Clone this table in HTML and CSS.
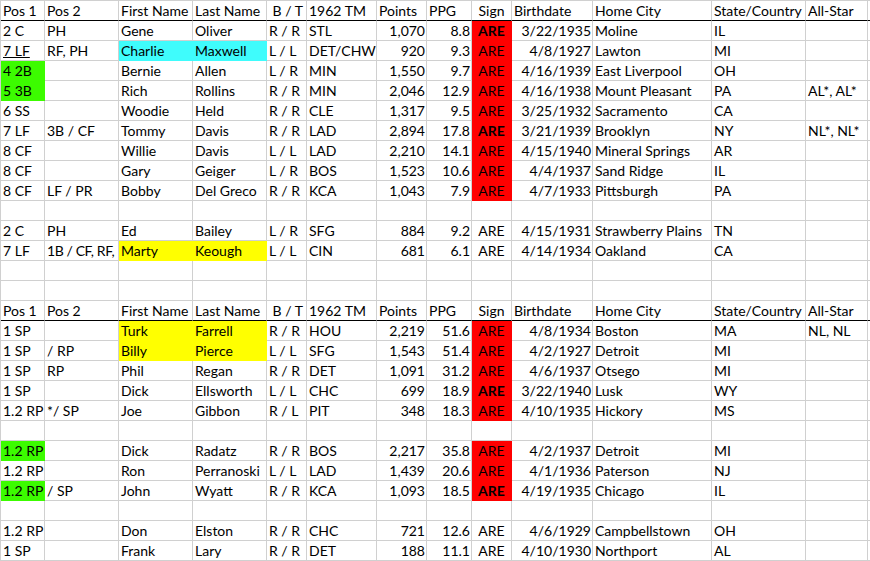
FILE: index.html
```html
<!DOCTYPE html>
<html>
<head>
<meta charset="utf-8">
<link rel="stylesheet" href="styles.css">
</head>
<body>
<div class="sheet">
  <div class="r hd"><div class="c">Pos 1</div><div class="c">Pos 2</div><div class="c">First Name</div><div class="c">Last Name</div><div class="c">&nbsp;B / T</div><div class="c">1962 TM</div><div class="c">Points</div><div class="c">PPG</div><div class="c ctr">Sign</div><div class="c">Birthdate</div><div class="c">Home City</div><div class="c">State/Country</div><div class="c">All-Star</div><div class="c"></div></div>

  <div class="r"><div class="c">2 C</div><div class="c">PH</div><div class="c">Gene</div><div class="c">Oliver</div><div class="c">R / R</div><div class="c">STL</div><div class="c num">1,070</div><div class="c num">8.8</div><div class="c ctr red b">ARE</div><div class="c num">3/22/1935</div><div class="c">Moline</div><div class="c">IL</div><div class="c"></div><div class="c"></div></div>
  <div class="r"><div class="c"><span class="u">7 LF</span></div><div class="c">RF, PH</div><div class="c cyan">Charlie</div><div class="c cyan">Maxwell</div><div class="c">L / L</div><div class="c">DET/CHW</div><div class="c num">920</div><div class="c num">9.3</div><div class="c ctr red">ARE</div><div class="c num">4/8/1927</div><div class="c">Lawton</div><div class="c">MI</div><div class="c"></div><div class="c"></div></div>
  <div class="r"><div class="c grn">4 2B</div><div class="c"></div><div class="c">Bernie</div><div class="c">Allen</div><div class="c">L / R</div><div class="c">MIN</div><div class="c num">1,550</div><div class="c num">9.7</div><div class="c ctr red">ARE</div><div class="c num">4/16/1939</div><div class="c">East Liverpool</div><div class="c">OH</div><div class="c"></div><div class="c"></div></div>
  <div class="r"><div class="c grn">5 3B</div><div class="c"></div><div class="c">Rich</div><div class="c">Rollins</div><div class="c">R / R</div><div class="c">MIN</div><div class="c num">2,046</div><div class="c num">12.9</div><div class="c ctr red">ARE</div><div class="c num">4/16/1938</div><div class="c">Mount Pleasant</div><div class="c">PA</div><div class="c">AL*, AL*</div><div class="c"></div></div>
  <div class="r"><div class="c">6 SS</div><div class="c"></div><div class="c">Woodie</div><div class="c">Held</div><div class="c">R / R</div><div class="c">CLE</div><div class="c num">1,317</div><div class="c num">9.5</div><div class="c ctr red">ARE</div><div class="c num">3/25/1932</div><div class="c">Sacramento</div><div class="c">CA</div><div class="c"></div><div class="c"></div></div>
  <div class="r"><div class="c">7 LF</div><div class="c">3B / CF</div><div class="c">Tommy</div><div class="c">Davis</div><div class="c">R / R</div><div class="c">LAD</div><div class="c num">2,894</div><div class="c num">17.8</div><div class="c ctr red b">ARE</div><div class="c num">3/21/1939</div><div class="c">Brooklyn</div><div class="c">NY</div><div class="c">NL*, NL*</div><div class="c"></div></div>
  <div class="r"><div class="c">8 CF</div><div class="c"></div><div class="c">Willie</div><div class="c">Davis</div><div class="c">L / L</div><div class="c">LAD</div><div class="c num">2,210</div><div class="c num">14.1</div><div class="c ctr red">ARE</div><div class="c num">4/15/1940</div><div class="c">Mineral Springs</div><div class="c">AR</div><div class="c"></div><div class="c"></div></div>
  <div class="r"><div class="c">8 CF</div><div class="c"></div><div class="c">Gary</div><div class="c">Geiger</div><div class="c">L / R</div><div class="c">BOS</div><div class="c num">1,523</div><div class="c num">10.6</div><div class="c ctr red">ARE</div><div class="c num">4/4/1937</div><div class="c">Sand Ridge</div><div class="c">IL</div><div class="c"></div><div class="c"></div></div>
  <div class="r"><div class="c">8 CF</div><div class="c">LF / PR</div><div class="c">Bobby</div><div class="c">Del Greco</div><div class="c">R / R</div><div class="c">KCA</div><div class="c num">1,043</div><div class="c num">7.9</div><div class="c ctr red">ARE</div><div class="c num">4/7/1933</div><div class="c">Pittsburgh</div><div class="c">PA</div><div class="c"></div><div class="c"></div></div>
  <div class="r"><div class="c"></div><div class="c"></div><div class="c"></div><div class="c"></div><div class="c"></div><div class="c"></div><div class="c"></div><div class="c"></div><div class="c"></div><div class="c"></div><div class="c"></div><div class="c"></div><div class="c"></div><div class="c"></div></div>
  <div class="r"><div class="c">2 C</div><div class="c">PH</div><div class="c">Ed</div><div class="c">Bailey</div><div class="c">L / R</div><div class="c">SFG</div><div class="c num">884</div><div class="c num">9.2</div><div class="c ctr">ARE</div><div class="c num">4/15/1931</div><div class="c">Strawberry Plains</div><div class="c">TN</div><div class="c"></div><div class="c"></div></div>
  <div class="r"><div class="c">7 LF</div><div class="c tight">1B / CF, RF,</div><div class="c yel">Marty</div><div class="c yel">Keough</div><div class="c">L / L</div><div class="c">CIN</div><div class="c num">681</div><div class="c num">6.1</div><div class="c ctr">ARE</div><div class="c num">4/14/1934</div><div class="c">Oakland</div><div class="c">CA</div><div class="c"></div><div class="c"></div></div>
  <div class="r"><div class="c"></div><div class="c"></div><div class="c"></div><div class="c"></div><div class="c"></div><div class="c"></div><div class="c"></div><div class="c"></div><div class="c"></div><div class="c"></div><div class="c"></div><div class="c"></div><div class="c"></div><div class="c"></div></div>
  <div class="r"><div class="c"></div><div class="c"></div><div class="c"></div><div class="c"></div><div class="c"></div><div class="c"></div><div class="c"></div><div class="c"></div><div class="c"></div><div class="c"></div><div class="c"></div><div class="c"></div><div class="c"></div><div class="c"></div></div>

  <div class="r hd"><div class="c">Pos 1</div><div class="c">Pos 2</div><div class="c">First Name</div><div class="c">Last Name</div><div class="c">&nbsp;B / T</div><div class="c">1962 TM</div><div class="c">Points</div><div class="c">PPG</div><div class="c ctr">Sign</div><div class="c">Birthdate</div><div class="c">Home City</div><div class="c">State/Country</div><div class="c">All-Star</div><div class="c"></div></div>

  <div class="r"><div class="c">1 SP</div><div class="c"></div><div class="c yel">Turk</div><div class="c yel">Farrell</div><div class="c">R / R</div><div class="c">HOU</div><div class="c num">2,219</div><div class="c num">51.6</div><div class="c ctr red">ARE</div><div class="c num">4/8/1934</div><div class="c">Boston</div><div class="c">MA</div><div class="c">NL, NL</div><div class="c"></div></div>
  <div class="r"><div class="c">1 SP</div><div class="c">/ RP</div><div class="c yel">Billy</div><div class="c yel">Pierce</div><div class="c">L / L</div><div class="c">SFG</div><div class="c num">1,543</div><div class="c num">51.4</div><div class="c ctr red">ARE</div><div class="c num">4/2/1927</div><div class="c">Detroit</div><div class="c">MI</div><div class="c"></div><div class="c"></div></div>
  <div class="r"><div class="c">1 SP</div><div class="c">RP</div><div class="c">Phil</div><div class="c">Regan</div><div class="c">R / R</div><div class="c">DET</div><div class="c num">1,091</div><div class="c num">31.2</div><div class="c ctr red">ARE</div><div class="c num">4/6/1937</div><div class="c">Otsego</div><div class="c">MI</div><div class="c"></div><div class="c"></div></div>
  <div class="r"><div class="c">1 SP</div><div class="c"></div><div class="c">Dick</div><div class="c">Ellsworth</div><div class="c">L / L</div><div class="c">CHC</div><div class="c num">699</div><div class="c num">18.9</div><div class="c ctr red b">ARE</div><div class="c num">3/22/1940</div><div class="c">Lusk</div><div class="c">WY</div><div class="c"></div><div class="c"></div></div>
  <div class="r"><div class="c">1.2 RP</div><div class="c">*/ SP</div><div class="c">Joe</div><div class="c">Gibbon</div><div class="c">R / L</div><div class="c">PIT</div><div class="c num">348</div><div class="c num">18.3</div><div class="c ctr red">ARE</div><div class="c num">4/10/1935</div><div class="c">Hickory</div><div class="c">MS</div><div class="c"></div><div class="c"></div></div>
  <div class="r"><div class="c"></div><div class="c"></div><div class="c"></div><div class="c"></div><div class="c"></div><div class="c"></div><div class="c"></div><div class="c"></div><div class="c"></div><div class="c"></div><div class="c"></div><div class="c"></div><div class="c"></div><div class="c"></div></div>
  <div class="r"><div class="c grn">1.2 RP</div><div class="c"></div><div class="c">Dick</div><div class="c">Radatz</div><div class="c">R / R</div><div class="c">BOS</div><div class="c num">2,217</div><div class="c num">35.8</div><div class="c ctr red">ARE</div><div class="c num">4/2/1937</div><div class="c">Detroit</div><div class="c">MI</div><div class="c"></div><div class="c"></div></div>
  <div class="r"><div class="c">1.2 RP</div><div class="c"></div><div class="c">Ron</div><div class="c">Perranoski</div><div class="c">L / L</div><div class="c">LAD</div><div class="c num">1,439</div><div class="c num">20.6</div><div class="c ctr red">ARE</div><div class="c num">4/1/1936</div><div class="c">Paterson</div><div class="c">NJ</div><div class="c"></div><div class="c"></div></div>
  <div class="r"><div class="c grn">1.2 RP</div><div class="c">/ SP</div><div class="c">John</div><div class="c">Wyatt</div><div class="c">R / R</div><div class="c">KCA</div><div class="c num">1,093</div><div class="c num">18.5</div><div class="c ctr red b">ARE</div><div class="c num">4/19/1935</div><div class="c">Chicago</div><div class="c">IL</div><div class="c"></div><div class="c"></div></div>
  <div class="r"><div class="c"></div><div class="c"></div><div class="c"></div><div class="c"></div><div class="c"></div><div class="c"></div><div class="c"></div><div class="c"></div><div class="c"></div><div class="c"></div><div class="c"></div><div class="c"></div><div class="c"></div><div class="c"></div></div>
  <div class="r"><div class="c">1.2 RP</div><div class="c"></div><div class="c">Don</div><div class="c">Elston</div><div class="c">R / R</div><div class="c">CHC</div><div class="c num">721</div><div class="c num">12.6</div><div class="c ctr">ARE</div><div class="c num">4/6/1929</div><div class="c">Campbellstown</div><div class="c">OH</div><div class="c"></div><div class="c"></div></div>
  <div class="r"><div class="c">1 SP</div><div class="c"></div><div class="c">Frank</div><div class="c">Lary</div><div class="c">R / R</div><div class="c">DET</div><div class="c num">188</div><div class="c num">11.1</div><div class="c ctr">ARE</div><div class="c num">4/10/1930</div><div class="c">Northport</div><div class="c">AL</div><div class="c"></div><div class="c"></div></div>
</div>
</body>
</html>
```

FILE: styles.css
```css
html, body {
  margin: 0;
  padding: 0;
  background: #fff;
}

.sheet {
  width: 870px;
  border-top: 1px solid #d0d0d0;
  border-left: 1px solid #d0d0d0;
  box-sizing: border-box;
  font-family: "Lato", "Liberation Sans", sans-serif;
  font-size: 14px;
  color: #000;
}

.r {
  display: grid;
  grid-template-columns: 44px 74px 74px 74px 40px 70px 50px 45px 40px 81px 119px 94px 62px 1fr;
}

.c {
  box-sizing: border-box;
  height: 20px;
  line-height: 19px;
  padding: 0 2px;
  border-right: 1px solid #d0d0d0;
  border-bottom: 1px solid #d0d0d0;
  white-space: nowrap;
  overflow: hidden;
}

.hd .c {
  border-bottom-color: #000;
}

.num { text-align: right; padding-right: 1px; }
.ctr { text-align: center; }
.b { font-weight: bold; }
.u { text-decoration: underline; }
.tight { letter-spacing: -0.4px; padding-right: 0; }

.red { background: #ff0000; border-color: #ff0000; }
.cyan { background: #3ffcfc; border-color: #3ffcfc; }
.yel { background: #ffff00; border-color: #ffff00; }
.grn { background: #3cfc00; border-color: #3cfc00; }
```
